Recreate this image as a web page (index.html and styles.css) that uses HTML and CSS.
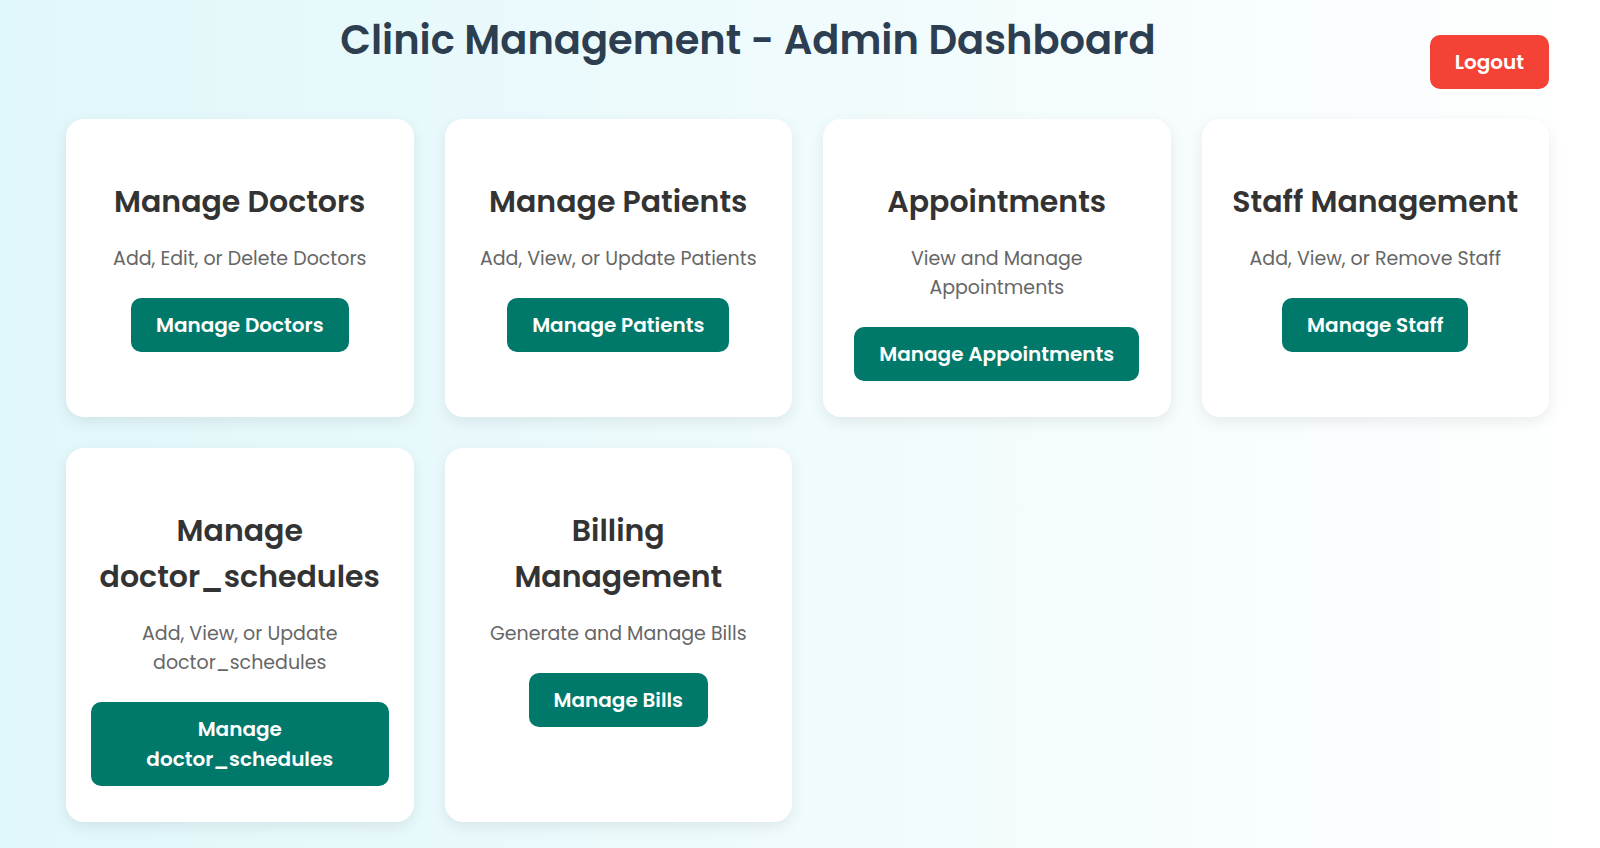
FILE: index.html
```html
<!DOCTYPE html>
<html lang="en">
<head>
<meta charset="utf-8">
<meta name="viewport" content="width=device-width, initial-scale=1">
<title>Clinic Management - Admin Dashboard</title>
<link rel="stylesheet" href="styles.css">
</head>
<body>
<div class="page">
  <header class="header">
    <h1 class="header-title">Clinic Management - Admin Dashboard</h1>
    <a class="button button-logout" href="#logout">Logout</a>
  </header>
  <main class="cards">
    <section class="card">
      <h2 class="card-title">Manage Doctors</h2>
      <p class="card-text">Add, Edit, or Delete Doctors</p>
      <a class="button" href="#doctors">Manage Doctors</a>
    </section>
    <section class="card">
      <h2 class="card-title">Manage Patients</h2>
      <p class="card-text">Add, View, or Update Patients</p>
      <a class="button" href="#patients">Manage Patients</a>
    </section>
    <section class="card">
      <h2 class="card-title">Appointments</h2>
      <p class="card-text">View and Manage<br>Appointments</p>
      <a class="button" href="#appointments">Manage Appointments</a>
    </section>
    <section class="card">
      <h2 class="card-title">Staff Management</h2>
      <p class="card-text">Add, View, or Remove Staff</p>
      <a class="button" href="#staff">Manage Staff</a>
    </section>
    <section class="card">
      <h2 class="card-title">Manage doctor_schedules</h2>
      <p class="card-text">Add, View, or Update doctor_schedules</p>
      <a class="button" href="#schedules">Manage doctor_schedules</a>
    </section>
    <section class="card">
      <h2 class="card-title">Billing<br>Management</h2>
      <p class="card-text">Generate and Manage Bills</p>
      <a class="button" href="#bills">Manage Bills</a>
    </section>
  </main>
</div>
</body>
</html>
```
FILE: styles.css
```css
* {
  box-sizing: border-box;
}

body {
  margin: 0;
  min-height: 100vh;
  font-family: Poppins, Inter, "Open Sans", sans-serif;
  background: linear-gradient(to right, #e0f7fa, #ffffff);
}

.page {
  padding: 10px 51px 26px 66px;
}

.header {
  display: flex;
  align-items: flex-end;
  margin-bottom: 30px;
}

.header-title {
  flex: 1;
  margin: 0 0 19px;
  font-size: 40px;
  line-height: 60px;
  font-weight: 600;
  text-align: center;
  color: #2c3e50;
}

.cards {
  display: grid;
  grid-template-columns: repeat(auto-fit, minmax(300px, 1fr));
  gap: 31px;
}

.card {
  padding: 60px 25px 36px;
  border-radius: 18px;
  background: #ffffff;
  box-shadow: 0 5px 15px rgba(0, 0, 0, 0.08);
  text-align: center;
}

.card-title {
  margin: 0 0 19px;
  font-size: 30px;
  line-height: 46px;
  font-weight: 600;
  color: #333333;
}

.card-text {
  margin: 0 0 25px;
  font-size: 19px;
  line-height: 29px;
  color: #666666;
}

.button {
  display: inline-block;
  padding: 12px 25px;
  border-radius: 10px;
  font-size: 20px;
  line-height: 30px;
  font-weight: 600;
  vertical-align: top;
  text-decoration: none;
  color: #ffffff;
  background: #00796b;
}

.button-logout {
  background: #f44336;
}
```
